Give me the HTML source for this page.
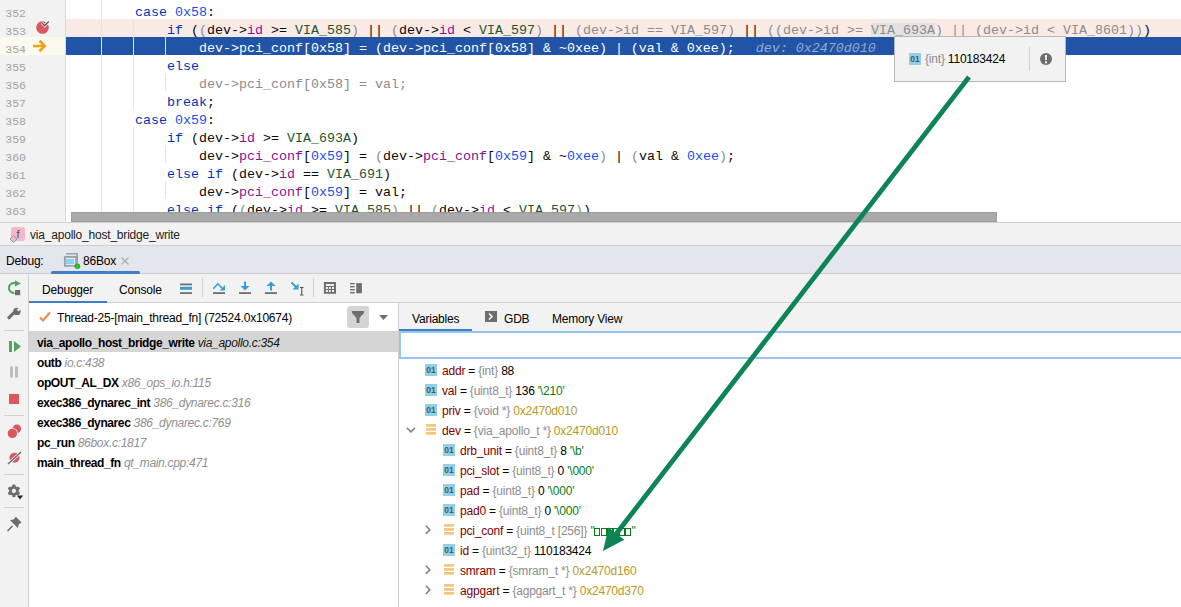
<!DOCTYPE html><html><head><meta charset="utf-8"><style>
*{box-sizing:border-box}
body{margin:0;width:1181px;height:607px;overflow:hidden;position:relative;background:#fff;font-family:"Liberation Sans",sans-serif;}
.a{position:absolute}
.code{position:absolute;left:71px;font-family:"Liberation Mono",monospace;font-size:13.333px;line-height:18px;white-space:pre;padding-top:3px;height:18px;overflow:hidden;color:#080808;}
.ln{position:absolute;left:0;width:26px;text-align:right;font-family:"Liberation Mono",monospace;font-size:11.5px;line-height:18px;color:#a3a3a3;padding-top:4px;}
.ui{font-family:"Liberation Sans",sans-serif;font-size:12px;letter-spacing:-0.2px;white-space:pre;color:#000;}
</style></head><body>

<div class="a" style="left:0;top:0;width:65px;height:222px;background:#f2f2f2"></div>
<div class="a" style="left:65px;top:0;width:1px;height:222px;background:#d9d9d9"></div>
<div class="a" style="left:0;top:37px;width:65px;height:18px;background:#fcfaee"></div>
<div class="a" style="left:66px;top:19px;width:1115px;height:18px;background:#faeae6"></div>
<div class="a" style="left:66px;top:37px;width:1115px;height:18px;background:#2154a6"></div>
<div class="a" style="left:101px;top:0px;width:1px;height:37px;background:#e3e3e3"></div>
<div class="a" style="left:101px;top:55px;width:1px;height:167px;background:#e3e3e3"></div>
<div class="a" style="left:133px;top:19px;width:1px;height:18px;background:#e3e3e3"></div>
<div class="a" style="left:133px;top:55px;width:1px;height:54px;background:#e3e3e3"></div>
<div class="a" style="left:133px;top:127px;width:1px;height:95px;background:#e3e3e3"></div>
<div class="a" style="left:165px;top:73px;width:1px;height:18px;background:#e3e3e3"></div>
<div class="a" style="left:165px;top:145px;width:1px;height:18px;background:#e3e3e3"></div>
<div class="a" style="left:165px;top:181px;width:1px;height:18px;background:#e3e3e3"></div>
<div class="a" style="left:101px;top:37px;width:1px;height:18px;background:#dfe3ea"></div>
<div class="a" style="left:133px;top:37px;width:1px;height:18px;background:#dfe3ea"></div>
<div class="a" style="left:165px;top:37px;width:1px;height:18px;background:#dfe3ea"></div>
<div class="ln" style="top:1px">352</div>
<div class="code" style="top:1px;color:#080808">        <span style="color:#0033b3;">case</span> <span style="color:#1750eb;">0x58</span>:</div>
<div class="ln" style="top:19px">353</div>
<div class="code" style="top:19px;color:#080808">            <span style="color:#0033b3;">if</span> (<span style="color:#8c8c8c;">(</span>dev-><span style="color:#871094;">id</span> &gt;= <span style="color:#1f542e;">VIA_585</span><span style="color:#8c8c8c;">)</span> || <span style="color:#8c8c8c;">(</span>dev-><span style="color:#871094;">id</span> &lt; <span style="color:#1f542e;">VIA_597</span><span style="color:#8c8c8c;">)</span> || <span style="color:#8c8c8c;">(dev-&gt;id == VIA_597)</span> || <span style="color:#8c8c8c;">(</span><span style="color:#8c8c8c;">(dev-&gt;id &gt;= </span><span style="color:#8c8c8c;background:#e2e2e2;">VIA_693A</span><span style="color:#8c8c8c;">) || (dev-&gt;id &lt; VIA_8601))</span>)</div>
<div class="ln" style="top:37px">354</div>
<div class="code" style="top:37px;color:#ffffff">                dev-&gt;pci_conf[0x58] = (dev-&gt;pci_conf[0x58] &amp; ~0xee) | (val &amp; 0xee);   <span style="color:#95a9d2;font-style:italic;position:relative;left:-3px;">dev: 0x2470d010</span></div>
<div class="ln" style="top:55px">355</div>
<div class="code" style="top:55px;color:#080808">            <span style="color:#0033b3;">else</span></div>
<div class="ln" style="top:73px">356</div>
<div class="code" style="top:73px;color:#080808">                <span style="color:#8c8c8c;">dev-&gt;pci_conf[0x58] = val;</span></div>
<div class="ln" style="top:91px">357</div>
<div class="code" style="top:91px;color:#080808">            <span style="color:#0033b3;">break</span>;</div>
<div class="ln" style="top:109px">358</div>
<div class="code" style="top:109px;color:#080808">        <span style="color:#0033b3;">case</span> <span style="color:#1750eb;">0x59</span>:</div>
<div class="ln" style="top:127px">359</div>
<div class="code" style="top:127px;color:#080808">            <span style="color:#0033b3;">if</span> (dev-&gt;<span style="color:#871094;">id</span> &gt;= <span style="color:#1f542e;">VIA_693A</span>)</div>
<div class="ln" style="top:145px">360</div>
<div class="code" style="top:145px;color:#080808">                dev-&gt;<span style="color:#871094;">pci_conf</span>[<span style="color:#1750eb;">0x59</span>] = <span style="color:#8c8c8c;">(</span>dev-&gt;<span style="color:#871094;">pci_conf</span>[<span style="color:#1750eb;">0x59</span>] &amp; ~<span style="color:#1750eb;">0xee</span><span style="color:#8c8c8c;">)</span> | <span style="color:#8c8c8c;">(</span>val &amp; <span style="color:#1750eb;">0xee</span><span style="color:#8c8c8c;">)</span>;</div>
<div class="ln" style="top:163px">361</div>
<div class="code" style="top:163px;color:#080808">            <span style="color:#0033b3;">else if</span> (dev-&gt;<span style="color:#871094;">id</span> == <span style="color:#1f542e;">VIA_691</span>)</div>
<div class="ln" style="top:181px">362</div>
<div class="code" style="top:181px;color:#080808">                dev-&gt;<span style="color:#871094;">pci_conf</span>[<span style="color:#1750eb;">0x59</span>] = val;</div>
<div class="ln" style="top:199px">363</div>
<div class="code" style="top:199px;color:#080808">            <span style="color:#0033b3;">else if</span> (<span style="color:#8c8c8c;">(</span>dev-&gt;<span style="color:#871094;">id</span> &gt;= <span style="color:#1f542e;">VIA_585</span><span style="color:#8c8c8c;">)</span> || <span style="color:#8c8c8c;">(</span>dev-&gt;<span style="color:#871094;">id</span> &lt; <span style="color:#1f542e;">VIA_597</span><span style="color:#8c8c8c;">)</span>)</div>
<svg class="a" style="left:34px;top:19px" width="18" height="16" viewBox="0 0 18 16">
<circle cx="8.5" cy="8.5" r="6.3" fill="#db5860"/>
<path d="M8 4.1 L10.7 6.8 L15 2.2" stroke="#f2f2f2" stroke-width="2.8" fill="none"/>
<path d="M8.2 4.3 L10.7 6.8 L14.8 2.4" stroke="#5a5a5a" stroke-width="1.3" fill="none"/>
</svg>
<svg class="a" style="left:32px;top:39px" width="16" height="14" viewBox="0 0 16 14">
<path d="M1 7 H12.5" stroke="#eda318" stroke-width="2.6"/>
<path d="M7.5 1.8 L12.8 7 L7.5 12.2" stroke="#eda318" stroke-width="2.6" fill="none"/>
</svg>
<div class="a" style="left:71px;top:212px;width:926px;height:10px;background:#a6a6a6;border:1px solid #999;opacity:.95"></div>
<div class="a" style="left:0;top:222px;width:1181px;height:24px;background:#f2f2f2;border-top:1px solid #d0d0d0;border-bottom:1px solid #d0d0d0"></div>
<svg class="a" style="left:9px;top:226px" width="18" height="18" viewBox="0 0 18 18">
<rect x="2" y="1" width="14" height="14" rx="2.5" fill="#f5b8c6"/>
<text x="9" y="12" font-family="Liberation Sans" font-size="11" fill="#4d4d4d" text-anchor="middle">f</text>
<path d="M4.5 9.5 L8 13 L4.5 16.5 L1 13 Z" fill="#f5b8c6" stroke="#8e97b8" stroke-width="1"/>
</svg>
<div class="a ui" style="left:30px;top:228px;line-height:14px;color:#222">via_apollo_host_bridge_write</div>
<div class="a" style="left:0;top:246px;width:1181px;height:28px;background:#e4e6ee;border-bottom:1px solid #c9ccd4"></div>
<div class="a ui" style="left:6px;top:254px;line-height:14px;color:#000">Debug:</div>
<svg class="a" style="left:63px;top:252px" width="18" height="18" viewBox="0 0 18 18">
<path d="M3 1.7 H14.2 V10.8" stroke="#9ba3ab" stroke-width="1.6" fill="none"/>
<rect x="1.9" y="4.9" width="11.2" height="8.9" fill="#eef0f4" stroke="#9ba3ab" stroke-width="1.9"/>
<rect x="2.9" y="6.9" width="8.3" height="5.1" fill="#8dd0ef"/>
<circle cx="14.4" cy="14.2" r="2.5" fill="#14d814" stroke="#4a4a4a" stroke-width="0.5"/>
</svg>
<div class="a ui" style="left:83px;top:254px;line-height:14px;color:#000">86Box</div>
<svg class="a" style="left:120px;top:256px" width="10" height="10" viewBox="0 0 10 10">
<path d="M1.5 1.5 L8.5 8.5 M8.5 1.5 L1.5 8.5" stroke="#a8abb3" stroke-width="1.1"/></svg>
<div class="a" style="left:51px;top:271px;width:89px;height:3px;border-radius:1.5px;background:#3c7fc6"></div>
<div class="a" style="left:0;top:274px;width:29px;height:333px;background:#f2f2f2;border-right:1px solid #cfcfcf"></div>
<div class="a" style="left:4px;top:330px;width:20px;height:1px;background:#d1d1d1"></div>
<div class="a" style="left:4px;top:415px;width:20px;height:1px;background:#d1d1d1"></div>
<div class="a" style="left:4px;top:474px;width:20px;height:1px;background:#d1d1d1"></div>
<div class="a" style="left:4px;top:507px;width:20px;height:1px;background:#d1d1d1"></div>
<svg class="a" style="left:5px;top:280px" width="18" height="18" viewBox="0 0 18 18">
<path d="M10.2 3.2 A5 5 0 1 0 9.4 13" stroke="#4fa65f" stroke-width="2.1" fill="none"/>
<path d="M10 0.3 L16 3.4 L10 6.5 Z" fill="#4fa65f"/>
<rect x="10" y="10" width="5.2" height="5.2" fill="#6e6e6e"/>
</svg>
<svg class="a" style="left:6px;top:306px" width="16" height="16" viewBox="0 0 16 16">
<path d="M2 12.6 L8.5 6.1" stroke="#6e6e6e" stroke-width="3"/>
<circle cx="10.9" cy="5.4" r="3.7" fill="#6e6e6e"/>
<rect x="-1.25" y="-3.2" width="2.5" height="5" fill="#f2f2f2" transform="translate(12.9 3.4) rotate(45)"/>
</svg>
<svg class="a" style="left:6px;top:339px" width="16" height="16" viewBox="0 0 16 16">
<rect x="3" y="2" width="3" height="11" fill="#4fa65f"/><path d="M8 2 L15 7.5 L8 13 Z" fill="#4fa65f"/></svg>
<svg class="a" style="left:6px;top:364px" width="16" height="16" viewBox="0 0 16 16">
<rect x="4" y="2.5" width="3" height="11" fill="#bdbdbd"/><rect x="9" y="2.5" width="3" height="11" fill="#bdbdbd"/></svg>
<div class="a" style="left:9px;top:394px;width:10px;height:10px;background:#db5860"></div>
<svg class="a" style="left:6px;top:423px" width="16" height="16" viewBox="0 0 16 16">
<circle cx="10.8" cy="5.8" r="4.3" fill="#db5860"/><circle cx="6.4" cy="10.4" r="5.4" fill="#f2f2f2"/><circle cx="6.4" cy="10.4" r="4.7" fill="#db5860"/></svg>
<svg class="a" style="left:6px;top:450px" width="16" height="16" viewBox="0 0 16 16">
<circle cx="8.5" cy="7.8" r="5" fill="#db5860"/><path d="M2 14 L15 2" stroke="#f2f2f2" stroke-width="3"/><path d="M2 14 L15 2" stroke="#6e6e6e" stroke-width="1.4"/></svg>
<svg class="a" style="left:6px;top:483px" width="18" height="18" viewBox="0 0 18 18">
<g fill="#6e6e6e" transform="translate(7.9 7.9)">
<circle r="4.9"/>
<rect x="-1.6" y="-6.4" width="3.2" height="12.8" rx="1"/>
<rect x="-1.6" y="-6.4" width="3.2" height="12.8" rx="1" transform="rotate(60)"/>
<rect x="-1.6" y="-6.4" width="3.2" height="12.8" rx="1" transform="rotate(120)"/>
</g><circle cx="7.9" cy="7.9" r="2.1" fill="#f2f2f2"/>
<path d="M10.8 12.6 H17.2 L14 16.4 Z" fill="#2b2b2b"/></svg>
<svg class="a" style="left:6px;top:516px" width="16" height="16" viewBox="0 0 16 16">
<path d="M1.5 15 L6.5 10" stroke="#6e6e6e" stroke-width="1.6"/>
<path d="M9.8 0.8 L15.6 6.6 L13 8 L11.8 12 L4 4.2 L8 3.2 Z" fill="#6e6e6e"/></svg>
<div class="a" style="left:29px;top:274px;width:1152px;height:29px;background:#f2f2f2;border-bottom:1px solid #d1d1d1"></div>
<div class="a ui" style="left:42px;top:283px;line-height:14px">Debugger</div>
<div class="a ui" style="left:119px;top:283px;line-height:14px">Console</div>
<div class="a" style="left:29px;top:301px;width:78px;height:2px;background:#3c7fc6"></div>
<svg class="a" style="left:178px;top:281px" width="16" height="16" viewBox="0 0 16 16">
<rect x="2" y="2.5" width="12" height="1.8" fill="#6e6e6e"/><rect x="2" y="5.8" width="12" height="3" fill="#389fd6"/><rect x="2" y="11.2" width="12" height="1.8" fill="#6e6e6e"/></svg>
<div class="a" style="left:202px;top:278px;width:1px;height:19px;background:#d1d1d1"></div>
<div class="a" style="left:313px;top:278px;width:1px;height:19px;background:#d1d1d1"></div>
<svg class="a" style="left:211px;top:280px" width="16" height="16" viewBox="0 0 16 16">
<rect x="2" y="12.2" width="12" height="1.8" fill="#6e6e6e"/>
<path d="M2.3 8.8 L6.8 3.8 L11 8" stroke="#389fd6" stroke-width="1.6" fill="none"/>
<path d="M14 5 V10.5 H8.5 Z" fill="#389fd6"/></svg>
<svg class="a" style="left:237px;top:280px" width="16" height="16" viewBox="0 0 16 16">
<rect x="2" y="12.2" width="12" height="1.8" fill="#6e6e6e"/>
<rect x="7" y="1.5" width="2" height="6" fill="#389fd6"/><path d="M3.5 6 H12.5 L8 10.5 Z" fill="#389fd6"/></svg>
<svg class="a" style="left:263px;top:280px" width="16" height="16" viewBox="0 0 16 16">
<rect x="2" y="12.2" width="12" height="1.8" fill="#6e6e6e"/>
<rect x="7" y="5" width="2" height="5.5" fill="#389fd6"/><path d="M3.5 6 H12.5 L8 1.5 Z" fill="#389fd6"/></svg>
<svg class="a" style="left:289px;top:280px" width="18" height="18" viewBox="0 0 18 18">
<path d="M2.5 2.5 L7.5 7.5" stroke="#389fd6" stroke-width="2"/><path d="M9.5 3.5 V9.5 H3.5 Z" fill="#389fd6"/>
<path d="M11 7.5 H14.5 M12.75 7.5 V15 M11 15 H14.5" stroke="#555" stroke-width="1.1" fill="none"/></svg>
<svg class="a" style="left:322px;top:280px" width="16" height="16" viewBox="0 0 16 16">
<path fill="#6e6e6e" fill-rule="evenodd" d="M1.9 1.9 H14 V13.8 H1.9 Z M3.9 4.1 V5.9 H12 V4.1 Z M3.9 7.1 V9 H5.9 V7.1 Z M6.9 7.1 V9 H8.8 V7.1 Z M10 7.1 V9 H12 V7.1 Z M3.9 10 V12 H5.9 V10 Z M6.9 10 V12 H8.8 V10 Z M10 10 V12 H12 V10 Z"/></svg>
<svg class="a" style="left:348px;top:280px" width="16" height="16" viewBox="0 0 16 16">
<g fill="#6e6e6e"><rect x="2" y="3" width="4.7" height="1.4"/><rect x="2" y="6" width="4.7" height="1.4"/><rect x="2" y="9" width="4.7" height="1.4"/><rect x="2" y="12" width="4.7" height="1.4"/><rect x="8.2" y="3.1" width="5.7" height="10.1"/></g></svg>
<div class="a" style="left:29px;top:303px;width:369px;height:28px;background:#fff"></div>
<svg class="a" style="left:38px;top:310px" width="14" height="14" viewBox="0 0 14 14">
<path d="M2 7.5 L5 10.5 L12 2.5" stroke="#f08953" stroke-width="2.2" fill="none"/></svg>
<div class="a ui" style="left:57px;top:311px;line-height:14px">Thread-25-[main_thread_fn] (72524.0x10674)</div>
<div class="a" style="left:347px;top:306px;width:22px;height:22px;border-radius:3px;background:#d4d4d4"></div>
<svg class="a" style="left:350px;top:309px" width="16" height="16" viewBox="0 0 16 16">
<path d="M2 2 H14 V4 L9.5 9 V14 H6.5 V9 L2 4 Z" fill="#6e6e6e"/></svg>
<svg class="a" style="left:378px;top:314px" width="11" height="7" viewBox="0 0 11 7">
<path d="M1 1 H10 L5.5 6 Z" fill="#6e6e6e"/></svg>
<div class="a" style="left:29px;top:331px;width:369px;height:276px;background:#fff"></div>
<div class="a" style="left:29px;top:331px;width:369px;height:21px;background:#d5d5d5"></div>
<div class="a ui" style="left:37px;top:336px;line-height:14px"><b style="letter-spacing:-0.4px">via_apollo_host_bridge_write</b> <i style="color:#151515;letter-spacing:-0.3px">via_apollo.c:354</i></div>
<div class="a ui" style="left:37px;top:356px;line-height:14px"><b style="letter-spacing:-0.4px">outb</b> <i style="color:#8f8f8f;letter-spacing:-0.3px">io.c:438</i></div>
<div class="a ui" style="left:37px;top:376px;line-height:14px"><b style="letter-spacing:-0.4px">opOUT_AL_DX</b> <i style="color:#8f8f8f;letter-spacing:-0.3px">x86_ops_io.h:115</i></div>
<div class="a ui" style="left:37px;top:396px;line-height:14px"><b style="letter-spacing:-0.4px">exec386_dynarec_int</b> <i style="color:#8f8f8f;letter-spacing:-0.3px">386_dynarec.c:316</i></div>
<div class="a ui" style="left:37px;top:416px;line-height:14px"><b style="letter-spacing:-0.4px">exec386_dynarec</b> <i style="color:#8f8f8f;letter-spacing:-0.3px">386_dynarec.c:769</i></div>
<div class="a ui" style="left:37px;top:436px;line-height:14px"><b style="letter-spacing:-0.4px">pc_run</b> <i style="color:#8f8f8f;letter-spacing:-0.3px">86box.c:1817</i></div>
<div class="a ui" style="left:37px;top:456px;line-height:14px"><b style="letter-spacing:-0.4px">main_thread_fn</b> <i style="color:#8f8f8f;letter-spacing:-0.3px">qt_main.cpp:471</i></div>
<div class="a" style="left:398px;top:303px;width:1px;height:304px;background:#d1d1d1"></div>
<div class="a" style="left:399px;top:303px;width:782px;height:28px;background:#f2f2f2"></div>
<div class="a ui" style="left:412px;top:312px;line-height:14px">Variables</div>
<svg class="a" style="left:484px;top:310px" width="14" height="14" viewBox="0 0 14 14">
<rect x="1" y="1" width="12" height="11" fill="#6e6e6e"/><path d="M5 3.5 L8 6.5 L5 9.5" stroke="#fff" stroke-width="1.5" fill="none"/></svg>
<div class="a ui" style="left:504px;top:312px;line-height:14px">GDB</div>
<div class="a ui" style="left:552px;top:312px;line-height:14px">Memory View</div>
<div class="a" style="left:399px;top:329px;width:73px;height:2px;background:#3c7fc6"></div>
<div class="a" style="left:399px;top:331px;width:800px;height:28px;background:#fff;border:2px solid #9ac4f0"></div>
<svg class="a" style="left:425px;top:364px" width="12" height="12" viewBox="0 0 12 12"><rect width="12" height="12" fill="#8fd0ea"/><text x="6" y="9" font-family="Liberation Sans" font-weight="bold" font-size="8.5" fill="#4a5a63" text-anchor="middle">01</text></svg>
<div class="a ui" style="left:442px;top:364px;line-height:14px"><span style="color:#800000">addr</span> = <span style="color:#8c8c8c">{int}</span> <span style="color:#000">88</span></div>
<svg class="a" style="left:425px;top:384px" width="12" height="12" viewBox="0 0 12 12"><rect width="12" height="12" fill="#8fd0ea"/><text x="6" y="9" font-family="Liberation Sans" font-weight="bold" font-size="8.5" fill="#4a5a63" text-anchor="middle">01</text></svg>
<div class="a ui" style="left:442px;top:384px;line-height:14px"><span style="color:#800000">val</span> = <span style="color:#8c8c8c">{uint8_t}</span> <span style="color:#000">136 </span><span style="color:#067d17">'\210'</span></div>
<svg class="a" style="left:425px;top:404px" width="12" height="12" viewBox="0 0 12 12"><rect width="12" height="12" fill="#8fd0ea"/><text x="6" y="9" font-family="Liberation Sans" font-weight="bold" font-size="8.5" fill="#4a5a63" text-anchor="middle">01</text></svg>
<div class="a ui" style="left:442px;top:404px;line-height:14px"><span style="color:#800000">priv</span> = <span style="color:#8c8c8c">{void *}</span> <span style="color:#b39a26">0x2470d010</span></div>
<svg class="a" style="left:425px;top:424px" width="12" height="12" viewBox="0 0 12 12"><g fill="#f4c57a"><rect x="1" y="0.1" width="10" height="2.7"/><rect x="1" y="4.1" width="10" height="2.7"/><rect x="1" y="8" width="10" height="2.7"/></g></svg>
<svg class="a" style="left:406px;top:427px" width="10" height="6" viewBox="0 0 10 6"><path d="M0.8 0.8 L4.9 4.9 L9 0.8" stroke="#7f7f7f" stroke-width="1.5" fill="none"/></svg>
<div class="a ui" style="left:442px;top:424px;line-height:14px"><span style="color:#800000">dev</span> = <span style="color:#8c8c8c">{via_apollo_t *}</span> <span style="color:#b39a26">0x2470d010</span></div>
<svg class="a" style="left:443px;top:444px" width="12" height="12" viewBox="0 0 12 12"><rect width="12" height="12" fill="#8fd0ea"/><text x="6" y="9" font-family="Liberation Sans" font-weight="bold" font-size="8.5" fill="#4a5a63" text-anchor="middle">01</text></svg>
<div class="a ui" style="left:460px;top:444px;line-height:14px"><span style="color:#800000">drb_unit</span> = <span style="color:#8c8c8c">{uint8_t}</span> <span style="color:#000">8 </span><span style="color:#067d17">'\b'</span></div>
<svg class="a" style="left:443px;top:464px" width="12" height="12" viewBox="0 0 12 12"><rect width="12" height="12" fill="#8fd0ea"/><text x="6" y="9" font-family="Liberation Sans" font-weight="bold" font-size="8.5" fill="#4a5a63" text-anchor="middle">01</text></svg>
<div class="a ui" style="left:460px;top:464px;line-height:14px"><span style="color:#800000">pci_slot</span> = <span style="color:#8c8c8c">{uint8_t}</span> <span style="color:#000">0 </span><span style="color:#067d17">'\000'</span></div>
<svg class="a" style="left:443px;top:484px" width="12" height="12" viewBox="0 0 12 12"><rect width="12" height="12" fill="#8fd0ea"/><text x="6" y="9" font-family="Liberation Sans" font-weight="bold" font-size="8.5" fill="#4a5a63" text-anchor="middle">01</text></svg>
<div class="a ui" style="left:460px;top:484px;line-height:14px"><span style="color:#800000">pad</span> = <span style="color:#8c8c8c">{uint8_t}</span> <span style="color:#000">0 </span><span style="color:#067d17">'\000'</span></div>
<svg class="a" style="left:443px;top:504px" width="12" height="12" viewBox="0 0 12 12"><rect width="12" height="12" fill="#8fd0ea"/><text x="6" y="9" font-family="Liberation Sans" font-weight="bold" font-size="8.5" fill="#4a5a63" text-anchor="middle">01</text></svg>
<div class="a ui" style="left:460px;top:504px;line-height:14px"><span style="color:#800000">pad0</span> = <span style="color:#8c8c8c">{uint8_t}</span> <span style="color:#000">0 </span><span style="color:#067d17">'\000'</span></div>
<svg class="a" style="left:443px;top:524px" width="12" height="12" viewBox="0 0 12 12"><g fill="#f4c57a"><rect x="1" y="0.1" width="10" height="2.7"/><rect x="1" y="4.1" width="10" height="2.7"/><rect x="1" y="8" width="10" height="2.7"/></g></svg>
<svg class="a" style="left:425px;top:525px" width="6" height="10" viewBox="0 0 6 10"><path d="M0.8 0.8 L4.9 4.9 L0.8 9" stroke="#7f7f7f" stroke-width="1.5" fill="none"/></svg>
<div class="a ui" style="left:460px;top:524px;line-height:14px"><span style="color:#800000">pci_conf</span> = <span style="color:#8c8c8c">{uint8_t [256]}</span> <span style="color:#067d17">"</span><span style="color:#067d17"><span style="display:inline-block;width:6px;height:8px;border:1px solid #067d17;margin-right:0.2px;vertical-align:-1px"></span><span style="display:inline-block;width:6px;height:8px;border:1px solid #067d17;margin-right:0.2px;vertical-align:-1px"></span><span style="display:inline-block;width:6px;height:8px;border:1px solid #067d17;margin-right:0.2px;vertical-align:-1px"></span><span style="display:inline-block;width:6px;height:8px;border:1px solid #067d17;margin-right:0.2px;vertical-align:-1px"></span><span style="display:inline-block;width:6px;height:8px;border:1px solid #067d17;margin-right:0.2px;vertical-align:-1px"></span><span style="display:inline-block;width:6px;height:8px;border:1px solid #067d17;margin-right:0.2px;vertical-align:-1px"></span></span><span style="color:#067d17">"</span></div>
<svg class="a" style="left:443px;top:544px" width="12" height="12" viewBox="0 0 12 12"><rect width="12" height="12" fill="#8fd0ea"/><text x="6" y="9" font-family="Liberation Sans" font-weight="bold" font-size="8.5" fill="#4a5a63" text-anchor="middle">01</text></svg>
<div class="a ui" style="left:460px;top:544px;line-height:14px"><span style="color:#800000">id</span> = <span style="color:#8c8c8c">{uint32_t}</span> <span style="color:#000">110183424</span></div>
<svg class="a" style="left:443px;top:564px" width="12" height="12" viewBox="0 0 12 12"><g fill="#f4c57a"><rect x="1" y="0.1" width="10" height="2.7"/><rect x="1" y="4.1" width="10" height="2.7"/><rect x="1" y="8" width="10" height="2.7"/></g></svg>
<svg class="a" style="left:425px;top:565px" width="6" height="10" viewBox="0 0 6 10"><path d="M0.8 0.8 L4.9 4.9 L0.8 9" stroke="#7f7f7f" stroke-width="1.5" fill="none"/></svg>
<div class="a ui" style="left:460px;top:564px;line-height:14px"><span style="color:#800000">smram</span> = <span style="color:#8c8c8c">{smram_t *}</span> <span style="color:#b39a26">0x2470d160</span></div>
<svg class="a" style="left:443px;top:584px" width="12" height="12" viewBox="0 0 12 12"><g fill="#f4c57a"><rect x="1" y="0.1" width="10" height="2.7"/><rect x="1" y="4.1" width="10" height="2.7"/><rect x="1" y="8" width="10" height="2.7"/></g></svg>
<svg class="a" style="left:425px;top:585px" width="6" height="10" viewBox="0 0 6 10"><path d="M0.8 0.8 L4.9 4.9 L0.8 9" stroke="#7f7f7f" stroke-width="1.5" fill="none"/></svg>
<div class="a ui" style="left:460px;top:584px;line-height:14px"><span style="color:#800000">agpgart</span> = <span style="color:#8c8c8c">{agpgart_t *}</span> <span style="color:#b39a26">0x2470d370</span></div>
<div class="a" style="left:894px;top:36px;width:172px;height:46px;background:#f2f2f2;border:1px solid #b8b8b8"></div>
<svg class="a" style="left:909px;top:53px" width="12" height="12" viewBox="0 0 12 12"><rect width="12" height="12" fill="#8fd0ea"/><text x="6" y="9" font-family="Liberation Sans" font-weight="bold" font-size="8.5" fill="#4a5a63" text-anchor="middle">01</text></svg>
<div class="a ui" style="left:925px;top:52px;line-height:14px"><span style="color:#8c8c8c">{int}</span> 110183424</div>
<div class="a" style="left:1029px;top:47px;width:1px;height:24px;background:#d1d1d1"></div>
<svg class="a" style="left:1039px;top:52px" width="14" height="14" viewBox="0 0 14 14"><circle cx="7" cy="7" r="6" fill="#6e6e6e"/><rect x="6" y="3" width="2" height="5" fill="#f2f2f2"/><rect x="6" y="9.3" width="2" height="2" fill="#f2f2f2"/></svg>
<svg class="a" style="left:0;top:0" width="1181" height="607" viewBox="0 0 1181 607">
<line x1="969" y1="77" x2="613" y2="538" stroke="#0c8456" stroke-width="4.8"/>
<path d="M603 551 L608.5 527.5 L624.3 539.7 Z" fill="#0c8456"/>
</svg></body></html>
